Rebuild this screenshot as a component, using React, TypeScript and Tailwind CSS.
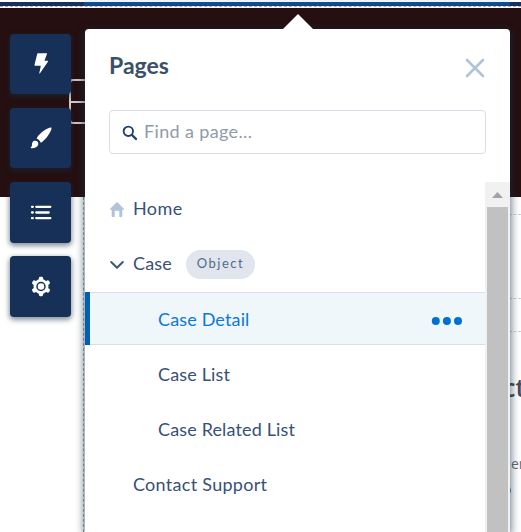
import React from "react";

const railButton =
  "flex w-[61px] shrink-0 items-center justify-center rounded bg-[#163058] shadow-[0_2px_5px_1px_rgba(20,45,65,0.5)]";

function Rail() {
  return (
    <div className="flex w-[61px] flex-col">
      <button className={railButton + " h-[60px]"}>
        <svg className="h-[60px] w-[61px]" viewBox="10 34 61 60" fill="white">
          <path d="M38 53.3h8.5q.8 0 .5.8l-2.6 6.7h3q1 0 .5.9L40 73.2q-.9.9-.7-.3l1.5-7.2h-5.600q-1 0-.7-1l2.700-10.700q.2-.7.8-.7z" />
        </svg>
      </button>
      <button className={railButton + " mt-3.5 h-[60px]"}>
        <svg className="h-[60px] w-[61px]" viewBox="10 108 61 60" fill="white">
          <path d="M50.400 127.500c.8-.3 1.300.2 1.100 1-.8 3.500-4.200 9.500-9.700 13.700-.7.500-1.200.4-1.500-.3-.6-1.300-1.500-2.300-2.900-3-.7-.3-.7-.8-.3-1.400 3.400-5.200 9.300-9 13.300-10z" />
          <path d="M35.300 140.700c1.900 0 3.200 1.600 3 3.400-.3 2.900-3.700 4.500-7.100 4.100-.6-.1-.7-.5-.2-.9 1.600-1.200.4-3.200 1.600-5.200.6-.9 1.600-1.400 2.700-1.400z" />
        </svg>
      </button>
      <button className={railButton + " mt-3.5 h-[61px]"}>
        <svg className="h-[61px] w-[61px]" viewBox="10 182 61 61" fill="none" stroke="white" strokeWidth="2.3" strokeLinecap="round">
          <path d="M32 206.800h.8M36.300 206.800h14M32 212.500h.8M36.300 212.500h12.400M32 218.200h.8M36.300 218.200h14" />
        </svg>
      </button>
      <button className={railButton + " mt-[13px] h-[61px]"}>
        <svg className="h-[61px] w-[61px]" viewBox="-31 -30.500 61 61">
          <g fill="white">
            <circle r="7.500" />
            <rect x="-2.100" y="-9.700" width="4.200" height="19.400" rx="1.400" />
            <rect x="-2.100" y="-9.700" width="4.200" height="19.400" rx="1.400" transform="rotate(60)" />
            <rect x="-2.100" y="-9.700" width="4.200" height="19.400" rx="1.400" transform="rotate(120)" />
          </g>
          <circle r="4" fill="white" stroke="#163058" strokeWidth="1.500" />
        </svg>
      </button>
    </div>
  );
}

function Panel() {
  return (
    <section className="relative mt-[29px] ml-3.5 flex h-[503px] w-[425px] flex-col rounded-t bg-white shadow-[0_2px_9px_1px_rgba(20,45,65,0.65)]">
      <svg className="absolute -top-[15px] left-[198px] h-[15px] w-[30px]" viewBox="0 0 30 15" fill="white">
        <path d="M0 15 15 0l15 15z" />
      </svg>
      <header className="flex h-[81px] items-start justify-between pr-[25px] pl-6">
        <h2 className="mt-[22px] text-[23px] leading-7 font-bold text-[#3a5068]">Pages</h2>
        <svg className="mt-[29px] h-5 w-5" viewBox="0 0 20 20" fill="none" stroke="#b0c4d9" strokeWidth="2.600" strokeLinecap="round">
          <path d="M2 2l16 16M18 2 2 18" />
        </svg>
      </header>
      <div className="mx-6 flex h-11 w-[377px] shrink-0 items-center rounded border border-[#d8dde6]">
        <svg className="mt-px ml-3 h-4 w-4" viewBox="0 0 16 16" fill="none" stroke="#1f3f72" strokeLinecap="round">
          <circle cx="6.300" cy="6.300" r="4.700" strokeWidth="1.900" />
          <path d="m10 10 4 4" strokeWidth="2.400" />
        </svg>
        <span className="-mt-0.5 ml-1.5 text-[18px] tracking-[0.36px] text-[#8f9baa]">Find a page...</span>
      </div>
      <div className="mt-7 flex min-h-0 flex-1">
        <nav className="flex w-[400px] flex-col text-[18px] tracking-[0.15px] text-[#385078]">
          <div className="flex h-[55px] items-center pl-[25px]">
            <svg className="h-[15px] w-3.5" viewBox="0 0 14 15" fill="#b0c4d9">
              <path d="M6.400.4q.6-.6 1.200 0l6.200 6.400q.6.8-.3.900H12.300v6.500q0 .8-.8.800H9.300V9.300q0-.6-.6-.6H5.300q-.6 0-.6.600V15H2.500q-.8 0-.8-.8V7.700H.5q-.9-.1-.3-.9z" />
            </svg>
            <span className="-mt-0.5 ml-[9px] tracking-[0.4px]">Home</span>
          </div>
          <div className="flex h-[55px] items-center pl-[25px]">
            <svg className="h-2.5 w-3.5" viewBox="0 0 14 10" fill="none" stroke="#405878" strokeWidth="2" strokeLinecap="round" strokeLinejoin="round">
              <path d="m1.200 2 5.800 5.800L12.800 2" />
            </svg>
            <span className="-mt-0.5 ml-[9px] w-[39px] whitespace-nowrap">Case</span>
            <span className="ml-3.5 flex h-[29px] w-[69px] items-center justify-center rounded-full bg-[#e0e5ee] pb-px text-[13px] tracking-[1.500px] text-[#556a8a]">Object</span>
          </div>
          <div className="flex h-[53px] items-center justify-between border-y border-[#d8dde6] bg-[#eff7fb] text-[#0c78d6]">
            <span className="-my-px h-[53px] w-[5px] bg-[#005fb2]" />
            <span className="mt-0.5 ml-[68px] flex-1">Case Detail</span>
            <svg className="mt-1 mr-[23px] h-2 w-[31px]" viewBox="0 0 31 8" fill="#0070d2">
              <circle cx="4.800" cy="4" r="4" />
              <circle cx="15.900" cy="4" r="4" />
              <circle cx="27" cy="4" r="4" />
            </svg>
          </div>
          <div className="mt-0.5 flex h-[55px] items-center pl-[73px]">Case List</div>
          <div className="flex h-[55px] items-center pl-[73px]">Case Related List</div>
          <div className="flex h-[55px] items-center pl-[48px] tracking-[0.28px]">Contact Support</div>
        </nav>
        <div className="flex w-[25px] flex-col items-center bg-[#f1f1f1]">
          <svg className="h-[25px] w-[25px] shrink-0" viewBox="0 0 25 25" fill="#a3a3a3">
            <path d="M7 16 12.500 10 18 16z" />
          </svg>
          <div className="w-[21px] flex-1 bg-[#c1c1c1]" />
        </div>
      </div>
    </section>
  );
}

function PageBehind() {
  return (
    <div className="flex h-[532px] flex-col">
      <div className="flex h-0.5">
        <div className="w-[84px] bg-white" />
        <div className="w-[426px] bg-[#eef6fd]" />
      </div>
      <div className="flex h-1 bg-[#16325c]">
        <div className="ml-[84px] w-[426px] bg-gradient-to-b from-[#0b5399] to-[#17427c]" />
      </div>
      <div className="h-0.5 border-t border-dashed border-[#b5a9c0] bg-white" />
      <div className="flex h-[189px] shrink-0 bg-[#250f11] pt-[71px]">
        <div className="ml-[69px] flex h-[45px] w-10 flex-col rounded border-2 border-[#cfc9c9]">
          <div className="h-[22px] border-b-2 border-[#cfc9c9]" />
        </div>
      </div>
      <div className="flex flex-1">
        <div className="w-[84px] border-r border-dashed border-[#9aa5b1]" />
        <div className="ml-[425px] flex flex-1 flex-col overflow-hidden whitespace-nowrap">
          <div className="h-[18px] border-b border-dashed border-[#ced3dc]" />
          <div className="h-[84px] border-b border-dashed border-[#ced3dc]" />
          <div className="h-[33px] border-b border-dashed border-[#ced3dc]" />
          <div className="mt-[39px] -ml-1.5 font-['Open_Sans',sans-serif] text-[25px] leading-8 font-semibold text-[#454c58]">ct</div>
          <div className="mt-[51px] ml-0.5 font-['Open_Sans',sans-serif] text-[14px] leading-5 text-[#666d7a]">er</div>
          <div className="mt-3 -ml-[7px] h-[9px] w-[9px] shrink-0 rounded-full bg-[#1589ee]" />
        </div>
      </div>
    </div>
  );
}

export default function App() {
  return (
    <main className="relative h-[532px] w-[521px] overflow-hidden bg-white font-[Lato,sans-serif]">
      <PageBehind />
      <div className="absolute inset-0 flex pl-2.5">
        <div className="pt-[34px]">
          <Rail />
        </div>
        <Panel />
      </div>
    </main>
  );
}
